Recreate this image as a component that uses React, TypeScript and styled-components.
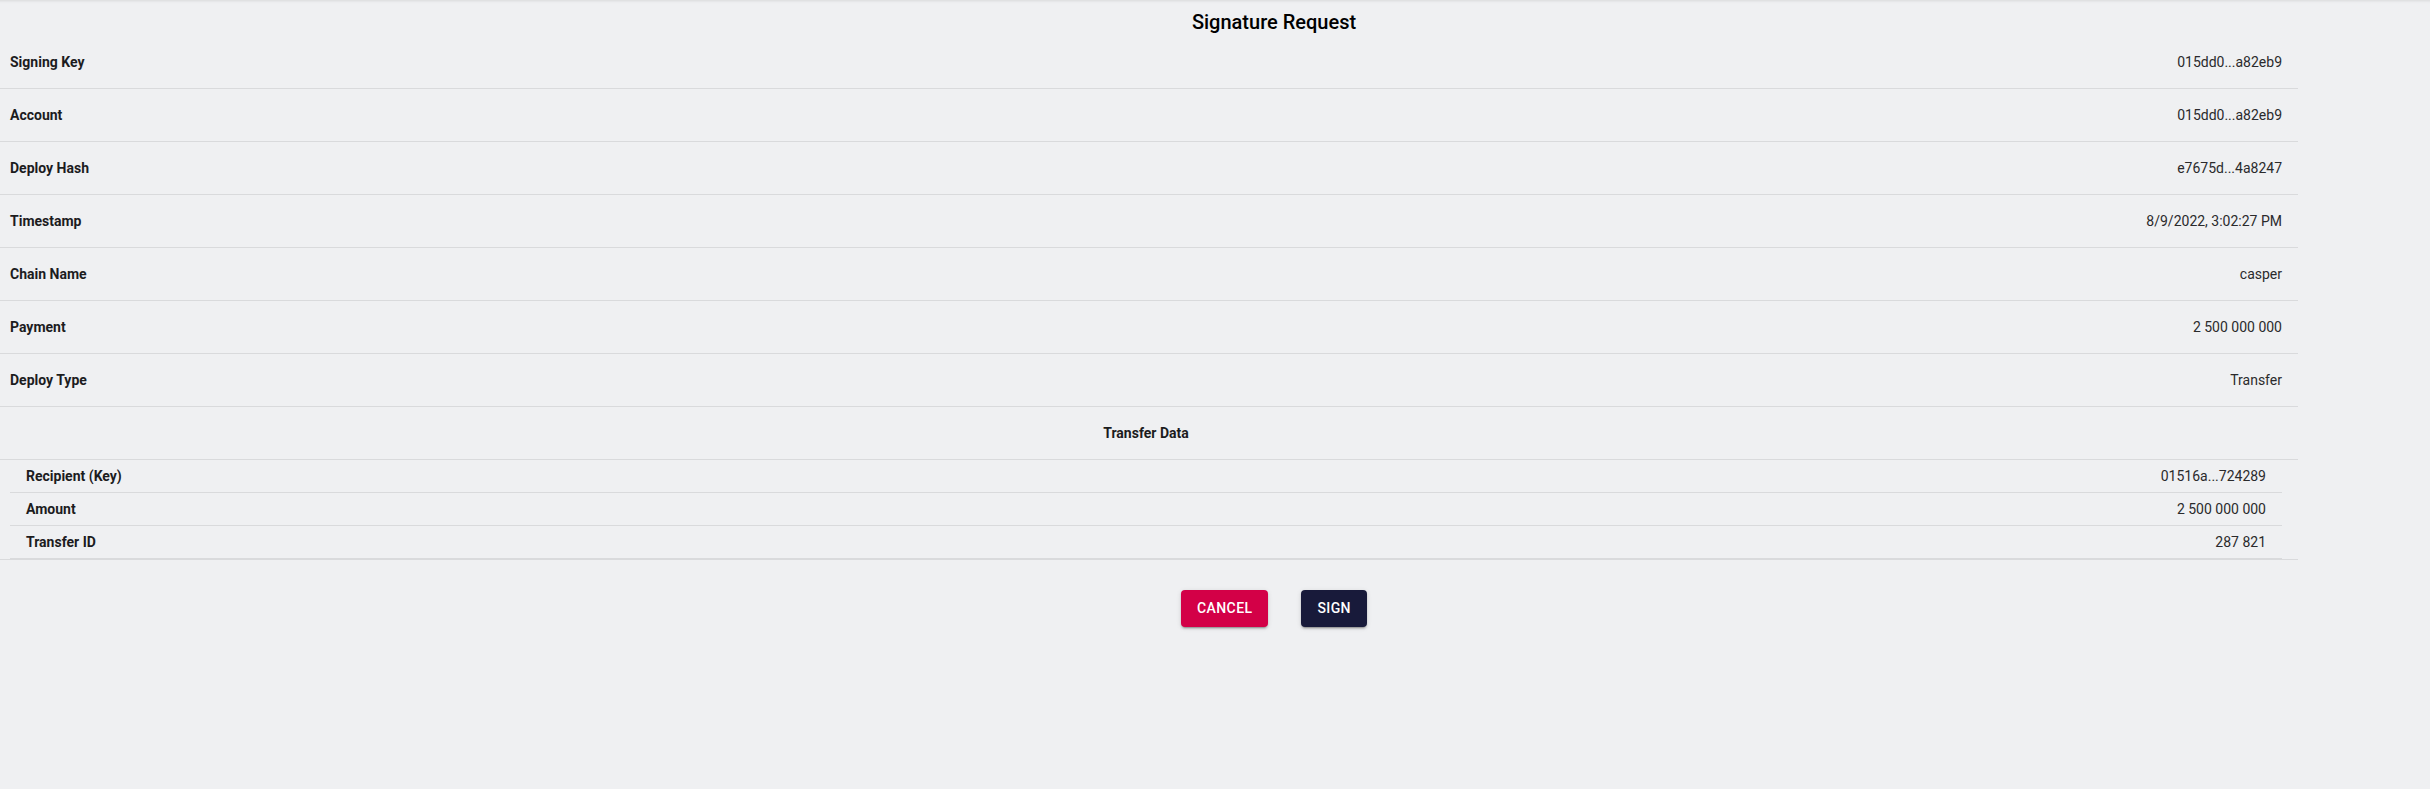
import styled, { createGlobalStyle } from 'styled-components'

const GlobalStyle = createGlobalStyle`
  html, body {
    margin: 0;
    padding: 0;
    background-color: #eff0f2;
  }
  body {
    font-family: Roboto, "Liberation Sans", Arial, sans-serif;
    color: rgba(0, 0, 0, 0.87);
  }
`

const Page = styled.main`
  min-height: 789px;
  background-color: #eff0f2;
  box-shadow: inset 0 4px 3px -3px rgba(0, 0, 0, 0.1);
`

const Header = styled.header`
  display: flex;
  justify-content: center;
  padding: 8px 0 0 118px;
  height: 36px;
  box-sizing: border-box;
`

const Title = styled.h1`
  margin: 0;
  font-size: 20px;
  font-weight: 500;
  line-height: 28px;
  color: #000;
`

const TableWrap = styled.div`
  padding-right: 132px;
`

const Table = styled.table`
  width: 100%;
  border-collapse: collapse;
  border-spacing: 0;
`

const Row = styled.tr``

const Cell = styled.td<{ $align?: 'left' | 'right' | 'center'; $bold?: boolean }>`
  padding: 16px 16px 16px 10px;
  font-size: 14px;
  line-height: 20px;
  text-align: ${(p) => p.$align ?? 'left'};
  font-weight: ${(p) => (p.$bold ? 700 : 400)};
  color: ${(p) => (p.$bold ? '#1c1c1e' : '#2a2a2c')};
  border-bottom: 1px solid #d9dadc;
  vertical-align: middle;
`

const NestedCell = styled.td`
  padding: 0 16px 0 10px;
  border-bottom: 1px solid #d9dadc;
`

const SmallCell = styled.td<{ $align?: 'left' | 'right'; $bold?: boolean }>`
  padding: 6px 16px;
  font-size: 14px;
  line-height: 20px;
  text-align: ${(p) => p.$align ?? 'left'};
  font-weight: ${(p) => (p.$bold ? 700 : 400)};
  color: ${(p) => (p.$bold ? '#1c1c1e' : '#2a2a2c')};
  border-bottom: 1px solid #d9dadc;
`

const Actions = styled.div`
  display: flex;
  justify-content: center;
  gap: 33px;
  margin-top: 30px;
  padding-left: 118px;
`

const Button = styled.button<{ $variant: 'cancel' | 'sign' }>`
  border: 0;
  border-radius: 4px;
  padding: 6px 16px;
  font-family: Roboto, "Liberation Sans", Arial, sans-serif;
  font-size: 14px;
  font-weight: 500;
  line-height: 24.5px;
  letter-spacing: 0.4px;
  text-transform: uppercase;
  color: #fff;
  cursor: pointer;
  background-color: ${(p) => (p.$variant === 'cancel' ? '#d30047' : '#181a3a')};
  box-shadow: 0 3px 1px -2px rgba(0, 0, 0, 0.2), 0 2px 2px 0 rgba(0, 0, 0, 0.14),
    0 1px 5px 0 rgba(0, 0, 0, 0.12);
`

const mainRows: [string, string][] = [
  ['Signing Key', '015dd0...a82eb9'],
  ['Account', '015dd0...a82eb9'],
  ['Deploy Hash', 'e7675d...4a8247'],
  ['Timestamp', '8/9/2022, 3:02:27 PM'],
  ['Chain Name', 'casper'],
  ['Payment', '2 500 000 000'],
  ['Deploy Type', 'Transfer'],
]

const transferRows: [string, string][] = [
  ['Recipient (Key)', '01516a...724289'],
  ['Amount', '2 500 000 000'],
  ['Transfer ID', '287 821'],
]

export default function App() {
  return (
    <>
      <GlobalStyle />
      <Page>
        <Header>
          <Title>Signature Request</Title>
        </Header>
        <TableWrap>
          <Table>
            <tbody>
              {mainRows.map(([label, value]) => (
                <Row key={label}>
                  <Cell $bold>{label}</Cell>
                  <Cell $align="right">{value}</Cell>
                </Row>
              ))}
              <Row>
                <Cell colSpan={2} $align="center" $bold>
                  Transfer Data
                </Cell>
              </Row>
              <Row>
                <NestedCell colSpan={2}>
                  <Table>
                    <tbody>
                      {transferRows.map(([label, value]) => (
                        <Row key={label}>
                          <SmallCell $bold>{label}</SmallCell>
                          <SmallCell $align="right">{value}</SmallCell>
                        </Row>
                      ))}
                    </tbody>
                  </Table>
                </NestedCell>
              </Row>
            </tbody>
          </Table>
        </TableWrap>
        <Actions>
          <Button $variant="cancel">Cancel</Button>
          <Button $variant="sign">Sign</Button>
        </Actions>
      </Page>
    </>
  )
}
